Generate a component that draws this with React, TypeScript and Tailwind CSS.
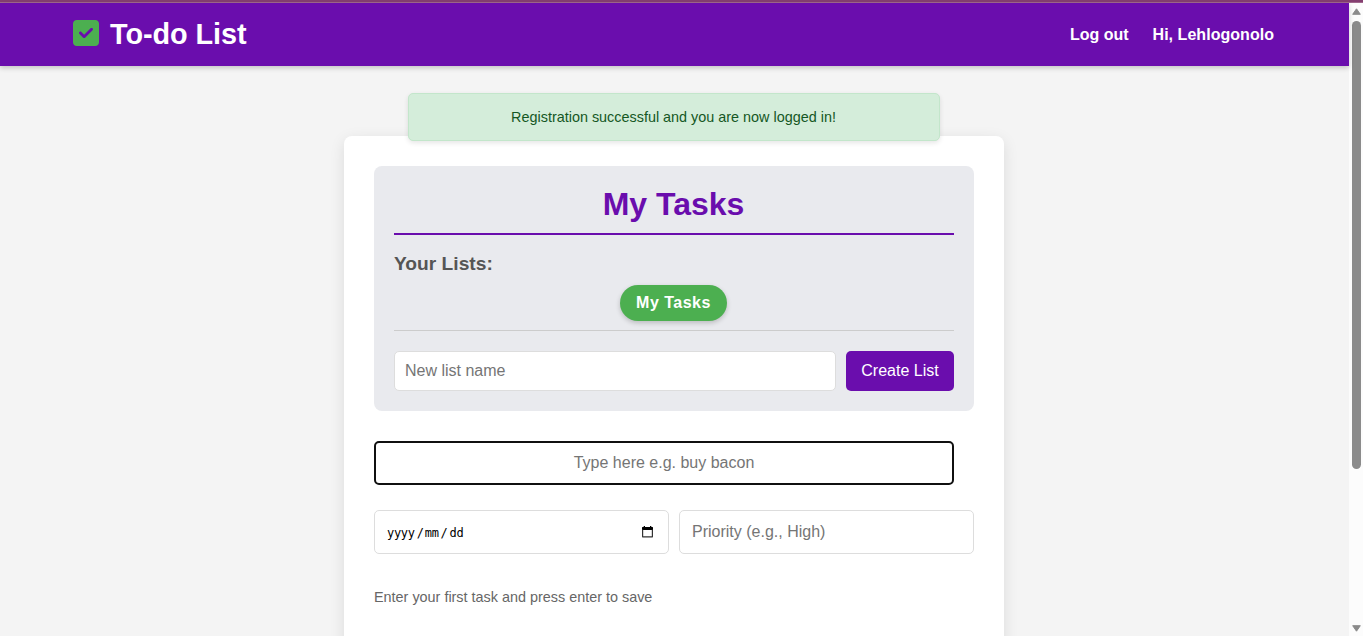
import { FaSquareCheck } from 'react-icons/fa6';

function Header() {
  return (
    <header className="relative z-10 flex h-[63px] shrink-0 items-center justify-between bg-[#6a0dad] pr-[75px] pl-[73px] text-white shadow-[0_2px_5px_rgba(0,0,0,0.2)]">
      <div className="flex items-center gap-[11px] pb-[3px]">
        <FaSquareCheck className="h-[30px] w-[26px] text-[#4caf50]" />
        <span className="pt-0.5 text-[28.8px] leading-[34px] font-bold tracking-[-0.05px]">To-do List</span>
      </div>
      <nav className="flex gap-6 text-base leading-5 font-bold">
        <a>Log out</a>
        <a className="tracking-[0.04px]">Hi, Lehlogonolo</a>
      </nav>
    </header>
  );
}

function ListPanel() {
  return (
    <section className="flex h-[245px] flex-col rounded-lg bg-[#e9eaee] px-5 pt-5">
      <h1 className="h-[49px] border-b-2 border-[#6a0dad] pr-px text-center text-[32px] leading-9 font-bold text-[#6a0dad]">
        My Tasks
      </h1>
      <h2 className="mt-[18px] text-[19.2px] leading-[22px] font-bold text-[#555]">Your Lists:</h2>
      <div className="mt-[10px] flex h-[46px] justify-center border-b border-[#ccc] pr-px">
        <span className="h-9 rounded-full bg-[#4caf50] px-4 text-base leading-[35px] font-bold tracking-[0.5px] text-white shadow-[0_2px_5px_rgba(0,0,0,0.2)]">
          My Tasks
        </span>
      </div>
      <div className="mt-5 flex h-10 gap-[10px]">
        <input
          placeholder="New list name"
          className="min-w-0 flex-1 rounded-[5px] border border-[#ddd] bg-white px-[10px] text-base placeholder:text-[#757575]"
        />
        <button className="w-[108px] rounded-[5px] bg-[#6a0dad] text-base text-white">Create List</button>
      </div>
    </section>
  );
}

function DateField() {
  return (
    <div className="flex h-11 items-center justify-between rounded-[5px] border border-[#ddd] pr-[15px] pl-3">
      <span className="flex gap-[3px] pt-px font-['DejaVu_Sans_Mono',monospace] text-[12px] leading-4 tracking-[-0.3px] text-black">
        <span>yyyy</span>
        <span className="w-[4px] -indent-px">/</span>
        <span>mm</span>
        <span className="w-[5px] -indent-px">/</span>
        <span>dd</span>
      </span>
      <svg width="11" height="12" viewBox="0 0 11 12">
        <path d="M.5 1H1.7V0H3v1h5V0h1.3v1h1.2l.5.5V4H0V1.5z" fill="#000" />
        <path d="M.6 3.5v7.3h9.8V3.5" fill="none" stroke="#333" strokeWidth="1.2" strokeLinejoin="round" />
      </svg>
    </div>
  );
}

function Scrollbar() {
  return (
    <div className="flex w-[14px] shrink-0 flex-col items-center bg-[#fcfcfc] pt-[5px] pb-1">
      <svg width="9" height="7" viewBox="0 0 9 7">
        <path d="M4.5 0.8 8.3 6.3H.7Z" fill="#8b8b8b" stroke="#8b8b8b" strokeLinejoin="round" />
      </svg>
      <div className="mt-[6px] h-[448px] w-[9px] rounded-full bg-[#8b8b8b]" />
      <svg className="mt-auto" width="9" height="7" viewBox="0 0 9 7">
        <path d="M4.5 6.2 8.3.7H.7Z" fill="#8b8b8b" stroke="#8b8b8b" strokeLinejoin="round" />
      </svg>
    </div>
  );
}

export default function App() {
  return (
    <div className="flex h-[636px] flex-col overflow-hidden bg-[#f4f4f4] font-['Liberation_Sans',Arial,sans-serif]">
      <div className="h-[3px] shrink-0 border-b border-[#a0688c] bg-[#843e70]" />
      <div className="flex min-h-0 flex-1">
        <div className="flex min-w-0 flex-1 flex-col">
          <Header />
          <main className="flex min-h-0 flex-1 flex-col items-center pt-[27px] pr-[1px]">
            <div className="relative z-10 mb-[-5px] h-12 w-[532px] shrink-0 rounded-[5px] border border-[#c3e6cb] bg-[#d4edda] pr-px text-center text-[14.4px] leading-[46px] text-[#155724] shadow-[0_2px_5px_rgba(0,0,0,0.1)]">
              Registration successful and you are now logged in!
            </div>
            <div className="h-[520px] w-[660px] shrink-0 rounded-lg bg-white p-[30px] shadow-[0_4px_15px_rgba(0,0,0,0.1)]">
              <ListPanel />
              <input
                placeholder="Type here e.g. buy bacon"
                className="mt-[30px] block h-11 w-[580px] rounded-[5px] border-2 border-[#101010] text-center text-base placeholder:text-[#757575]"
              />
              <div className="mt-[25px] grid grid-cols-2 gap-[10px]">
                <DateField />
                <input
                  placeholder="Priority (e.g., High)"
                  className="h-11 min-w-0 rounded-[5px] border border-[#ddd] px-3 text-base placeholder:text-[#757575]"
                />
              </div>
              <p className="mt-[34px] text-[14.4px] leading-[18px] text-[#666]">
                Enter your first task and press enter to save
              </p>
            </div>
          </main>
        </div>
        <Scrollbar />
      </div>
    </div>
  );
}
